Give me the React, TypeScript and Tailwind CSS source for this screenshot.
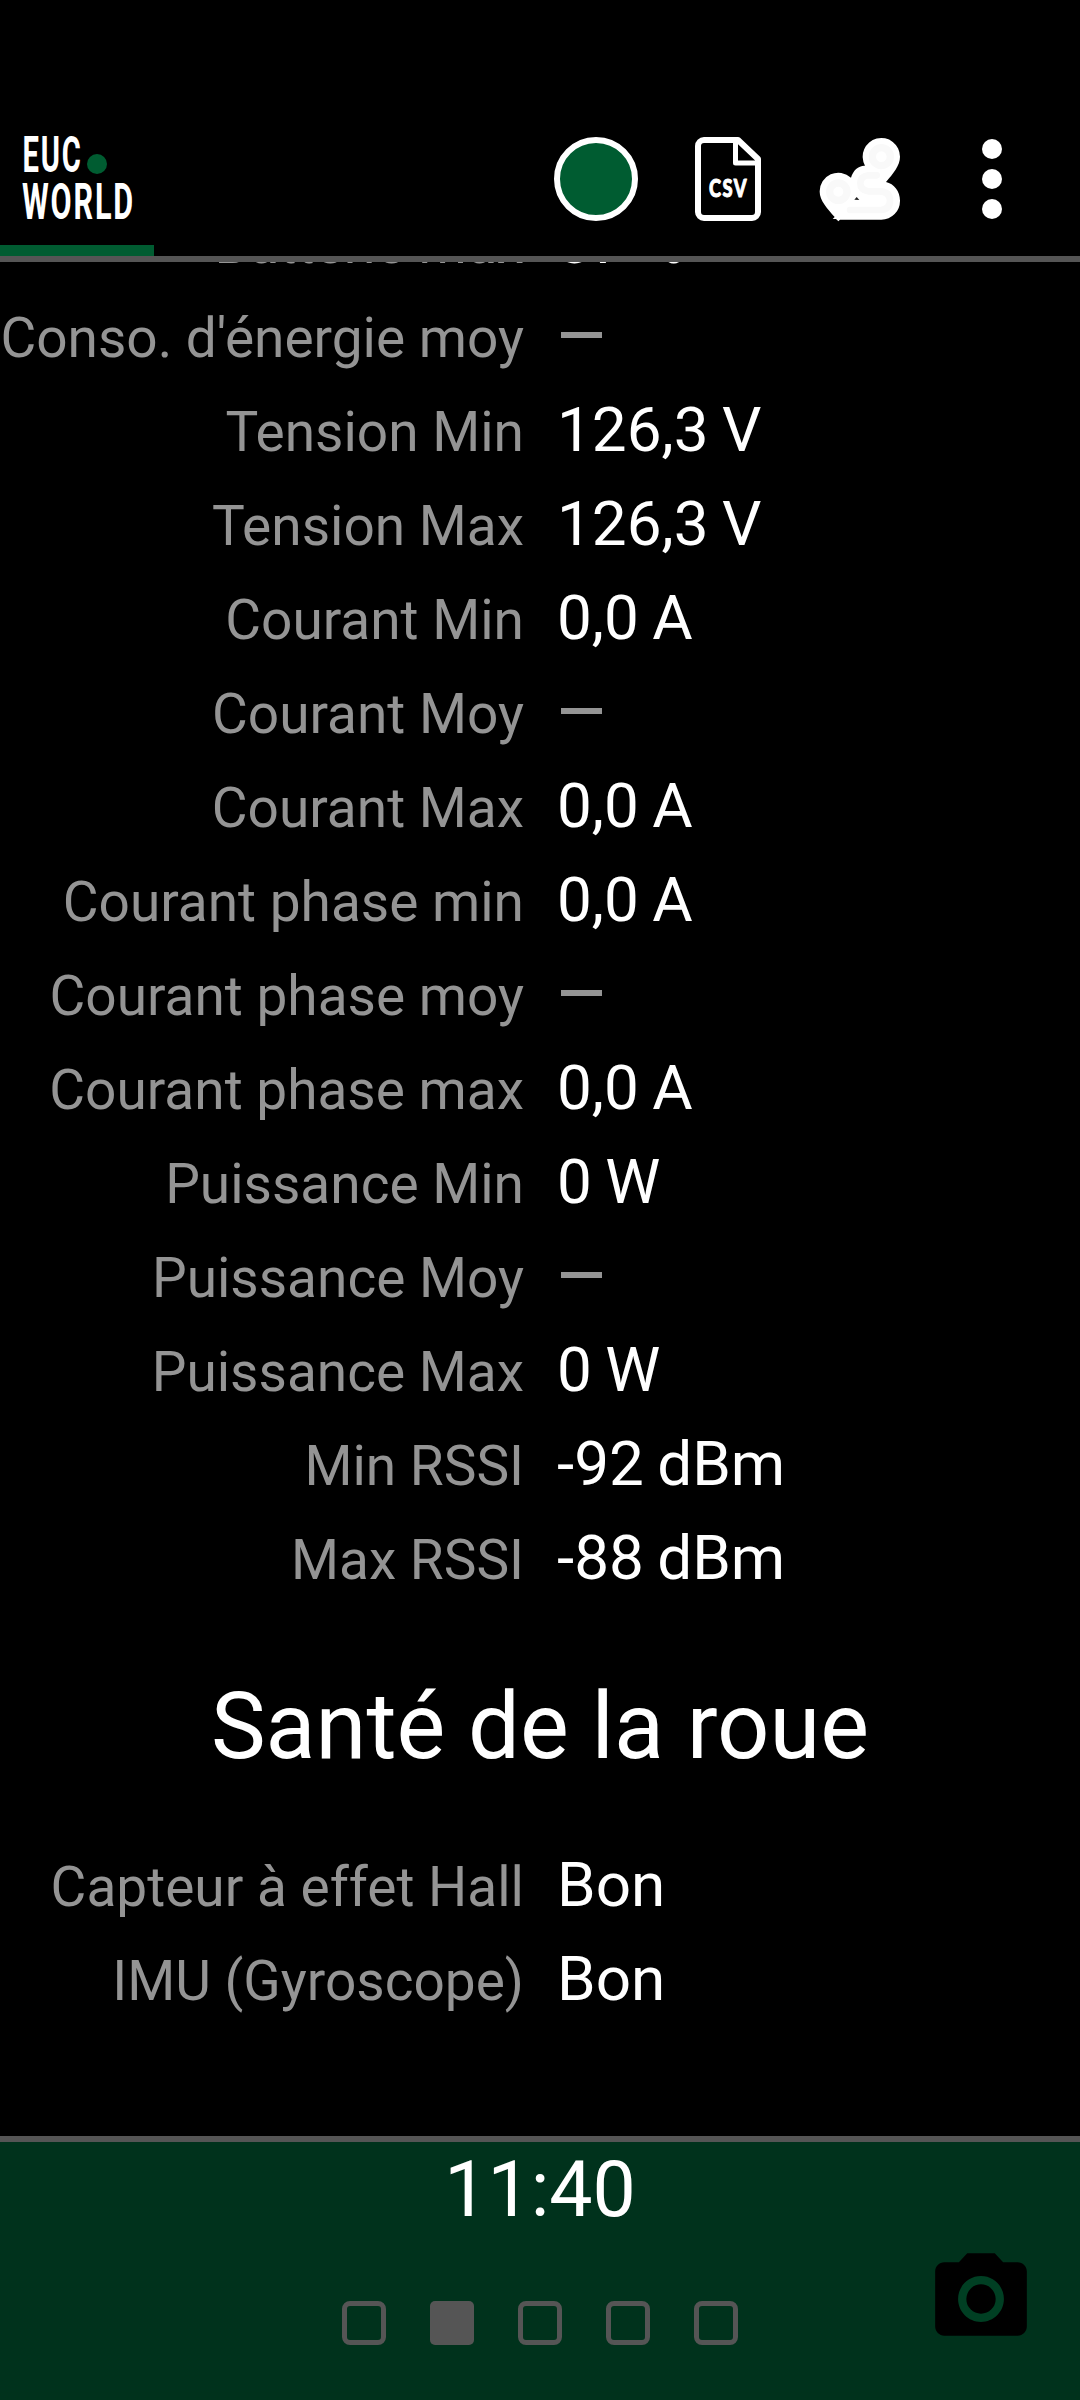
import React from 'react';

type Stat = { label: string; value: string | null };

const TRIP_STATS: Stat[] = [
  { label: 'Batterie max', value: '87 %' },
  { label: "Conso. d'énergie moy", value: null },
  { label: 'Tension Min', value: '126,3 V' },
  { label: 'Tension Max', value: '126,3 V' },
  { label: 'Courant Min', value: '0,0 A' },
  { label: 'Courant Moy', value: null },
  { label: 'Courant Max', value: '0,0 A' },
  { label: 'Courant phase min', value: '0,0 A' },
  { label: 'Courant phase moy', value: null },
  { label: 'Courant phase max', value: '0,0 A' },
  { label: 'Puissance Min', value: '0 W' },
  { label: 'Puissance Moy', value: null },
  { label: 'Puissance Max', value: '0 W' },
  { label: 'Min RSSI', value: '-92 dBm' },
  { label: 'Max RSSI', value: '-88 dBm' },
];

const HEALTH_STATS: Stat[] = [
  { label: 'Capteur à effet Hall', value: 'Bon' },
  { label: 'IMU (Gyroscope)', value: 'Bon' },
];

const PAGES = [0, 1, 2, 3, 4];
const ACTIVE_PAGE = 1;

function StatRow({ label, value }: Stat) {
  return (
    <div className="flex h-[94px] items-baseline whitespace-nowrap leading-[94px]">
      <div className="flex w-[524px] shrink-0 justify-end text-[55px] text-[#949494]">{label}</div>
      {value === null ? (
        <div className="ml-[33px] text-[62px] text-[#949494]">
          <span className="inline-block h-[6px] w-[41px] -translate-y-[19px] translate-x-[4px] bg-[#949494] align-baseline" />
        </div>
      ) : (
        <div className="ml-[33px] text-[62px] text-white [word-spacing:-2px]">{value}</div>
      )}
    </div>
  );
}

function Logo() {
  return (
    <svg
      width="120"
      height="90"
      viewBox="0 0 120 90"
      className="ml-[20px] overflow-visible"
      fontFamily="Roboto, sans-serif"
      fontWeight="700"
      fontSize="49.500"
      letterSpacing="3"
    >
      <text x="2.500" y="38" textLength="60" lengthAdjust="spacingAndGlyphs" fill="#fff">EUC</text>
      <circle cx="77" cy="30" r="10" fill="#005c31" />
      <text x="2" y="85" textLength="113" lengthAdjust="spacingAndGlyphs" fill="#fff">WORLD</text>
    </svg>
  );
}

function CsvIcon() {
  return (
    <svg width="66" height="84" viewBox="0 0 66 84" fill="none" stroke="#fff" strokeWidth="6" strokeLinejoin="round">
      <path d="M9 3H43L63 22V75a6 6 0 0 1-6 6H9a6 6 0 0 1-6-6V9a6 6 0 0 1 6-6z" />
      <path d="M40.500 3V26H63" strokeWidth="5" />
      <text x="14" y="60" textLength="39" lengthAdjust="spacingAndGlyphs" fill="#fff" stroke="#fff" strokeWidth="1" letterSpacing="2" fontFamily="Lato, sans-serif" fontWeight="900" fontSize="25">CSV</text>
    </svg>
  );
}

function RouteIcon() {
  return (
    <svg width="94" height="86" viewBox="99 50 282 258" fill="none">
      <path
        d="M175 306L168 299H158L164 293C142 268 119 243 119 217A56 56 0 0 1 213 175C219 153 236 138 255 139A56 56 0 1 1 360 112C360 138 340 162 318 188C342 193 360 216 360 244A56 56 0 0 1 304 301H180Z"
        fill="#fff"
      />
      <g stroke="#f9f9f9" strokeLinecap="round" strokeLinejoin="round">
        <circle cx="304" cy="112" r="27" strokeWidth="22" />
        <circle cx="175" cy="217" r="26" strokeWidth="22" />
        <path d="M290 168H264Q241 172 241 192T264 216H304" strokeWidth="20" />
        <path d="M304 216Q330 220 330 244T304 272H210" strokeWidth="20" />
      </g>
      <path d="M223 241L230 233L238 242Z" fill="#222" />
    </svg>
  );
}

function CameraIcon() {
  return (
    <svg width="110" height="110" viewBox="0 0 24 24">
      <circle cx="12" cy="12" r="5.200" fill="#003f23" />
      <path d="M9 2L7.170 4H4c-1.100 0-2 .9-2 2v12c0 1.100.9 2 2 2h16c1.100 0 2-.9 2-2V6c0-1.100-.9-2-2-2h-3.170L15 2H9zm3 15c-2.760 0-5-2.240-5-5s2.240-5 5-5 5 2.240 5 5-2.240 5-5 5z" />
      <circle cx="12" cy="12" r="3.200" />
    </svg>
  );
}

export default function App() {
  return (
    <div className="flex h-[2400px] w-[1080px] flex-col overflow-hidden bg-black font-['Roboto',sans-serif]">
      {/* Toolbar */}
      <header className="flex h-[262px] shrink-0 flex-col border-b-[6px] border-[#555555] pt-[124px]">
        <div className="flex h-[110px] items-center">
          <Logo />
          <div className="ml-auto mr-[22px] flex items-center">
            <button className="flex w-[132px] justify-center" aria-label="Enregistrer">
              <span className="h-[84px] w-[84px] rounded-full border-[6px] border-white bg-[#005c31]" />
            </button>
            <button className="flex w-[132px] justify-center" aria-label="CSV">
              <CsvIcon />
            </button>
            <button className="flex w-[132px] justify-center" aria-label="Parcours">
              <RouteIcon />
            </button>
            <button className="flex w-[132px] flex-col items-center gap-[10px]" aria-label="Menu">
              <span className="h-[20px] w-[20px] rounded-full bg-white" />
              <span className="h-[20px] w-[20px] rounded-full bg-white" />
              <span className="h-[20px] w-[20px] rounded-full bg-white" />
            </button>
          </div>
        </div>
        <div className="mt-[11px] h-[11px] w-[154px] bg-[#005c31]" />
      </header>

      {/* Scrolled statistics */}
      <main className="h-[1874px] shrink-0 overflow-hidden">
        <div className="-mt-[67px]">
          {TRIP_STATS.map((stat) => (
            <StatRow key={stat.label} {...stat} />
          ))}
          <h2 className="mt-[32px] h-[180px] text-center text-[92px] leading-[180px] text-white">Santé de la roue</h2>
          <div className="mt-[21px]">
            {HEALTH_STATS.map((stat) => (
              <StatRow key={stat.label} {...stat} />
            ))}
          </div>
        </div>
      </main>

      {/* Clock and page indicator */}
      <footer className="relative flex h-[264px] shrink-0 flex-col items-center border-t-[6px] border-[#555555] bg-[#00321c]">
        <div className="h-[96px] text-[77px] leading-[96px] text-white">11:40</div>
        <div className="mt-[63px] flex gap-[44px]">
          {PAGES.map((page) => (
            <span
              key={page}
              className={page === ACTIVE_PAGE ? 'h-[44px] w-[44px] rounded-[5px] bg-[#555555]' : 'h-[44px] w-[44px] rounded-[8px] border-[5px] border-[#555555]'}
            />
          ))}
        </div>
        <button className="absolute bottom-[46px] right-[44px]" aria-label="Capture">
          <CameraIcon />
        </button>
      </footer>
    </div>
  );
}
